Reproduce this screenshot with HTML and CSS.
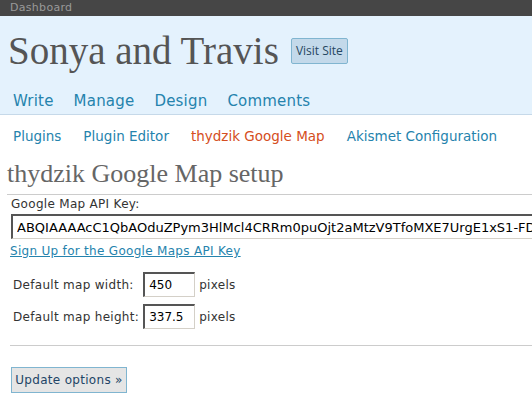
FILE: index.html
```html
<!DOCTYPE html>
<html lang="en">
<head>
    <meta charset="UTF-8">
    <title>Sonya and Travis &rsaquo; thydzik Google Map</title>
    <link rel="stylesheet" href="styles.css">
</head>
<body>
    <div class="topbar">Dashboard</div>
    <header class="head">
        <div class="blog-title">
            <h1>Sonya and Travis</h1>
            <a class="visit" href="#">Visit Site</a>
        </div>
        <nav class="main-menu">
            <a href="#">Write</a>
            <a href="#">Manage</a>
            <a href="#">Design</a>
            <a href="#">Comments</a>
        </nav>
    </header>
    <nav class="sub-menu">
        <a href="#">Plugins</a>
        <a href="#">Plugin Editor</a>
        <a href="#" class="current">thydzik Google Map</a>
        <a href="#">Akismet Configuration</a>
    </nav>
    <div class="wrap">
        <h2>thydzik Google Map setup</h2>
        <form class="options">
            <label class="key-label" for="apikey">Google Map API Key:</label>
            <div class="key-box">
                <input type="text" id="apikey" class="key-input" value="ABQIAAAAcC1QbAOduZPym3HlMcl4CRRm0puOjt2aMtzV9TfoMXE7UrgE1xS1-FDHx4h0EuEn2cbqUt3yQhJMTA">
            </div>
            <a class="signup" href="#">Sign Up for the Google Maps API Key</a>
            <table class="sizes">
                <tr>
                    <td class="label">Default map width:</td>
                    <td><input type="text" class="small" value="450"></td>
                    <td>pixels</td>
                </tr>
                <tr>
                    <td class="label">Default map height:</td>
                    <td><input type="text" class="small" value="337.5"></td>
                    <td>pixels</td>
                </tr>
            </table>
            <hr>
            <div class="submit">
                <button type="button">Update options &raquo;</button>
            </div>
        </form>
    </div>
</body>
</html>
```

FILE: styles.css
```css
body {
    margin: 0;
    padding: 0;
    background: #fff;
    color: #333;
    font-family: "DejaVu Sans", Verdana, sans-serif;
    font-size: 13px;
    overflow: hidden;
}
a {
    color: #2583ad;
    text-decoration: none;
}
.topbar {
    height: 16px;
    background-color: #464646;
    color: #999;
    font-size: 11px;
    line-height: 16px;
    padding-left: 10px;
    letter-spacing: 0.3px;
}
.head {
    background-color: #e4f2fd;
    border-bottom: 1px solid #c6d9e9;
    height: 98px;
}
.blog-title {
    display: flex;
    align-items: center;
    padding: 16px 0 0 8px;
    height: 38px;
}
.blog-title h1 {
    margin: 0;
    font-family: "Liberation Serif", "Times New Roman", serif;
    font-weight: normal;
    font-size: 39px;
    color: #555;
    line-height: 38px;
}
.visit {
    margin-left: 12px;
    font-size: 12px;
    color: #264761;
    background-color: #c3d9ea;
    border: 1px solid #80b5d0;
    border-radius: 2px;
    padding: 3px 4px 4px;
    font-family: "Open Sans", sans-serif;
}
.main-menu {
    display: flex;
    gap: 20px;
    padding: 22px 0 0 13px;
}
.main-menu a {
    font-size: 15px;
    letter-spacing: 0.2px;
}
.sub-menu {
    display: flex;
    gap: 22px;
    padding: 13px 0 0 13px;
}
.sub-menu a {
    font-size: 13.5px;
}
.sub-menu a.current {
    color: #d54e21;
}
.wrap {
    padding: 0 0 0 7px;
}
.wrap h2 {
    margin: 15px 0 0;
    font-family: "Liberation Serif", "Times New Roman", serif;
    font-weight: normal;
    font-size: 26px;
    color: #666;
    padding-bottom: 5px;
    border-bottom: 1px solid #ccc;
}
.options {
    padding-left: 4px;
    font-size: 12px;
    letter-spacing: 0.3px;
}
.key-label {
    display: block;
    margin-top: 2px;
}
.key-box {
    overflow: hidden;
    margin-top: 3px;
}
.key-input {
    display: block;
    box-sizing: border-box;
    width: 540px;
    height: 25px;
    padding: 0 4px;
    font-family: "DejaVu Sans", Verdana, sans-serif;
    font-size: 13px;
    color: #000;
    border: 2px solid #555;
    border-right: 1px solid #d4d0c8;
    border-bottom: 1px solid #d4d0c8;
}
.signup {
    display: block;
    margin: 5px 0 0 -1px;
    text-decoration: underline;
}
.sizes {
    margin-top: 10px;
    border-collapse: collapse;
}
.sizes td {
    padding: 4px 2px 3px;
    vertical-align: middle;
    white-space: nowrap;
}
.sizes td.label {
    width: 126px;
}
.small {
    box-sizing: border-box;
    width: 52px;
    height: 25px;
    padding: 0 4px;
    font-family: "DejaVu Sans", Verdana, sans-serif;
    font-size: 12px;
    color: #000;
    border: 2px solid #555;
    border-right: 1px solid #d4d0c8;
    border-bottom: 1px solid #d4d0c8;
}
.options hr {
    border: 0;
    border-top: 1px solid #ccc;
    height: 0;
    margin: 13px 0 0 -1px;
}
.submit {
    padding-top: 21px;
}
.submit button {
    font-family: "DejaVu Sans", Verdana, sans-serif;
    font-size: 12px;
    letter-spacing: 0.3px;
    color: #246;
    background: #e5e5e5;
    border: 1px solid #80b5d0;
    height: 26px;
    width: 116px;
    padding: 0;
}
```
